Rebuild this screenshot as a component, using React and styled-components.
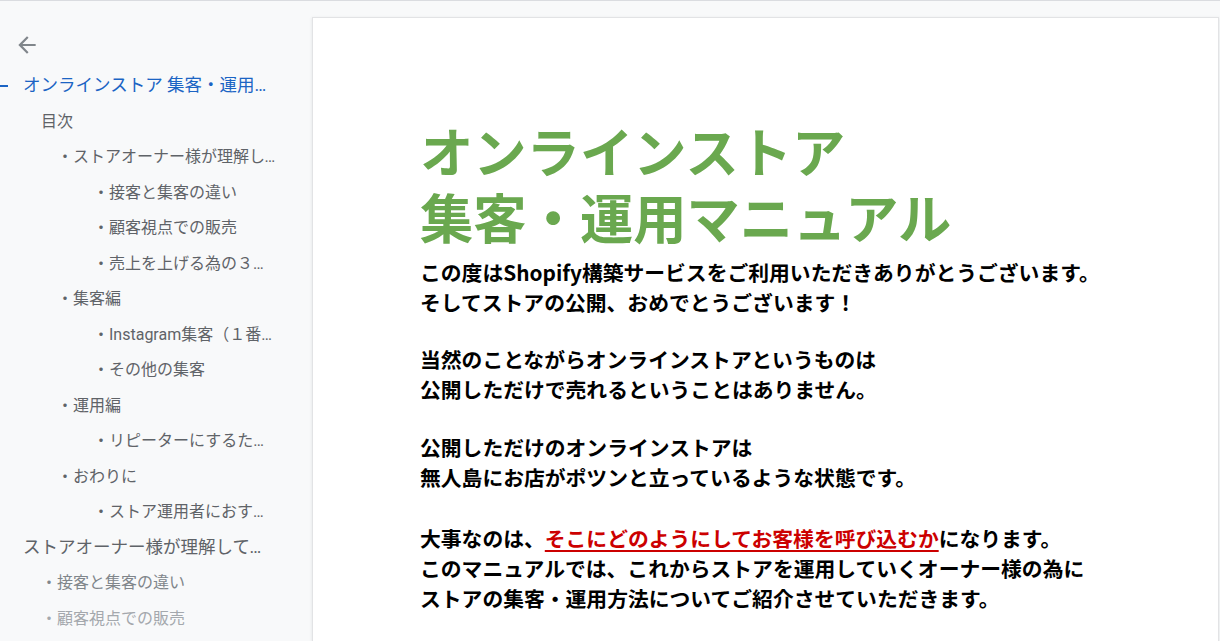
import React from 'react';
import styled, { createGlobalStyle, css } from 'styled-components';
import { MdArrowBack } from 'react-icons/md';

const GlobalStyle = createGlobalStyle`
  html, body {
    margin: 0;
    padding: 0;
    height: 100%;
    overflow: hidden;
    background: #f8f9fa;
  }
`;

const Shell = styled.div`
  height: 100vh;
  display: flex;
  flex-direction: column;
  border-top: 1px solid #dadce0;
  box-sizing: border-box;
`;

const Body = styled.div`
  flex: 1;
  display: flex;
  min-height: 0;
`;

const Sidebar = styled.nav`
  width: 312px;
  flex-shrink: 0;
  padding: 30px 34px 0 0;
  box-sizing: border-box;
  font-family: Roboto, 'Noto Sans CJK JP', sans-serif;
`;

const BackButton = styled.button`
  display: flex;
  align-items: center;
  justify-content: center;
  width: 28px;
  height: 28px;
  margin: 0 0 9px 13px;
  padding: 0;
  border: none;
  background: none;
  color: #80868b;
  cursor: pointer;
`;

const Outline = styled.ul`
  list-style: none;
  margin: 0;
  padding: 0;
`;

const levelStyles = {
  0: css`
    font-size: 17.5px;
    padding-left: 23px;
  `,
  1: css`
    font-size: 16px;
    padding-left: 41px;
  `,
  2: css`
    font-size: 16px;
    padding-left: 57px;
  `,
  3: css`
    font-size: 16px;
    padding-left: 93px;
  `,
};

const Item = styled.li`
  display: flex;
  align-items: center;
  height: 35.5px;
  line-height: 35.5px;
  color: ${(p) => (p.$active ? '#1b64c4' : p.$fade || '#5f6368')};
  ${(p) => levelStyles[p.$level]}
  ${(p) => p.$active && css`padding-left: 0;`}
`;

const Label = styled.span`
  flex: 1;
  min-width: 0;
  white-space: nowrap;
  overflow: hidden;
  text-overflow: ellipsis;
`;

const Dash = styled.span`
  width: 8px;
  height: 2px;
  margin-right: 15px;
  flex-shrink: 0;
  background: #1b64c4;
`;

const Canvas = styled.main`
  flex: 1;
  padding-top: 16px;
  margin-right: 1px;
  min-width: 0;
`;

const Page = styled.article`
  background: #fff;
  height: 100%;
  border: 1px solid #e2e3e5;
  border-bottom: none;
  box-shadow: 0 1px 3px rgba(60, 64, 67, 0.12);
  padding: 99px 0 0 107px;
  box-sizing: border-box;
  font-family: 'Noto Sans CJK JP', 'Noto Sans', sans-serif;
`;

const Title = styled.h1`
  margin: 0;
  color: #6aa84f;
  font-size: 53.3px;
  line-height: 66px;
  font-weight: 700;
`;

const Paragraph = styled.p`
  margin: ${(p) => p.$gap}px 0 0;
  color: #000;
  font-size: 20.8px;
  line-height: 30px;
  font-weight: 700;
  white-space: nowrap;
`;

const Emphasis = styled.span`
  color: #cc0000;
  text-decoration: underline;
  text-underline-offset: 3px;
  text-decoration-thickness: 2px;
`;

const outline = [
  { level: 0, text: 'オンラインストア 集客・運用マニュアル', active: true },
  { level: 1, text: '目次' },
  { level: 2, text: '・ストアオーナー様が理解しておくべきこと' },
  { level: 3, text: '・接客と集客の違い' },
  { level: 3, text: '・顧客視点での販売' },
  { level: 3, text: '・売上を上げる為の３つの要素' },
  { level: 2, text: '・集客編' },
  { level: 3, text: '・Instagram集客（１番おすすめ）' },
  { level: 3, text: '・その他の集客' },
  { level: 2, text: '・運用編' },
  { level: 3, text: '・リピーターにするために' },
  { level: 2, text: '・おわりに' },
  { level: 3, text: '・ストア運用者におすすめの本' },
  { level: 0, text: 'ストアオーナー様が理解しておくべきこと' },
  { level: 1, text: '・接客と集客の違い', fade: '#80868b' },
  { level: 1, text: '・顧客視点での販売', fade: '#a4a8ad' },
];

export default function App() {
  return (
    <>
      <GlobalStyle />
      <Shell>
        <Body>
          <Sidebar>
            <BackButton aria-label="戻る">
              <MdArrowBack size={26} />
            </BackButton>
            <Outline>
              {outline.map((item, i) => (
                <Item key={i} $level={item.level} $active={item.active} $fade={item.fade}>
                  {item.active && <Dash />}
                  <Label>{item.text}</Label>
                </Item>
              ))}
            </Outline>
          </Sidebar>
          <Canvas>
            <Page>
              <Title>
                オンラインストア
                <br />
                集客・運用マニュアル
              </Title>
              <Paragraph $gap={8}>
                この度はShopify構築サービスをご利用いただきありがとうございます。
                <br />
                そしてストアの公開、おめでとうございます！
              </Paragraph>
              <Paragraph $gap={27}>
                当然のことながらオンラインストアというものは
                <br />
                公開しただけで売れるということはありません。
              </Paragraph>
              <Paragraph $gap={28}>
                公開しただけのオンラインストアは
                <br />
                無人島にお店がポツンと立っているような状態です。
              </Paragraph>
              <Paragraph $gap={31}>
                大事なのは、<Emphasis>そこにどのようにしてお客様を呼び込むか</Emphasis>になります。
                <br />
                このマニュアルでは、これからストアを運用していくオーナー様の為に
                <br />
                ストアの集客・運用方法についてご紹介させていただきます。
              </Paragraph>
            </Page>
          </Canvas>
        </Body>
      </Shell>
    </>
  );
}
